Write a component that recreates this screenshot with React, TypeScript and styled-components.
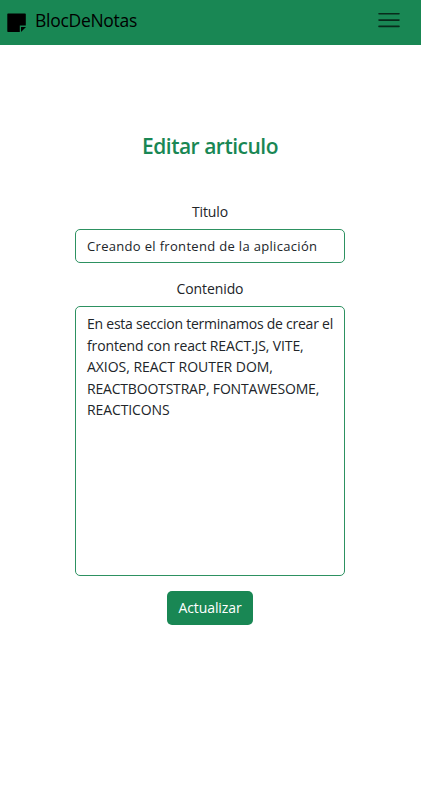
import React from 'react';
import styled, { createGlobalStyle } from 'styled-components';

const Global = createGlobalStyle`
  *{box-sizing:border-box}
  body{margin:0;background:#fff;color:#212529;font-family:"Open Sans","Noto Sans",sans-serif;font-size:14px;line-height:21.5px}
`;
const Navbar = styled.header`
  height:45.3px;background:#198754;display:flex;align-items:flex-start;justify-content:space-between;padding:0 20px 0 7px;
`;
const Brand = styled.div`
  display:flex;align-items:flex-start;color:#000;
`;
const NoteIcon = styled.svg`
  margin:13px 8px 0 0;
`;
const BrandName = styled.span`
  font-size:17.5px;line-height:24px;margin-top:8px;letter-spacing:-.28px;
`;
const Toggle = styled.svg`
  margin-top:10px;
`;
const Main = styled.main`
  display:flex;flex-direction:column;align-items:center;padding:86.7px 1px 0 0;
`;
const Title = styled.h1`
  margin:0 0 42px;height:27px;line-height:28px;font-size:21px;font-weight:600;color:#198754;letter-spacing:-.5px;
`;
const Label = styled.label`
  height:22px;margin-bottom:6.5px;letter-spacing:-.1px;
`;
const Field = styled.div<{ $h: number }>`
  width:270px;height:${p => p.$h}px;margin-bottom:14.5px;border:1px solid #2d9161;border-radius:5px;padding:6px 11px;
`;
const Text = styled.span<{ $track: number; $size?: number }>`
  display:block;white-space:nowrap;letter-spacing:${p => p.$track}px;font-size:${p => p.$size ?? 14}px;
`;
const Button = styled.button`
  width:86px;height:34px;border:0;border-radius:5px;background:#198754;color:#fff;font:inherit;letter-spacing:-.1px;padding:0;
`;

export default function App() {
  return <>
    <Global />
    <Navbar>
      <Brand>
        <NoteIcon width="20" height="20" viewBox="0 0 20 20"><path d="M1 .5h17q.8 0 .8.8v11.200h-6v6.500H1q-.7 0-.7-.7V1q0-.5.7-.5z" /><path d="M14 19v-5h5z" /></NoteIcon>
        <BrandName>BlocDeNotas</BrandName>
      </Brand>
      <Toggle width="24" height="20" viewBox="0 0 24 20" stroke="#082b1b" strokeWidth="1.6" strokeLinecap="round"><path d="M2 3.800h20M2 10.100h20M2 16.400h20" /></Toggle>
    </Navbar>
    <Main>
      <Title>Editar articulo</Title>
      <Label>Titulo</Label>
      <Field $h={34}><Text $track={0.32} $size={13}>Creando el frontend de la aplicación</Text></Field>
      <Label>Contenido</Label>
      <Field $h={270}>
        <Text $track={-0.24}>En esta seccion terminamos de crear el</Text>
        <Text $track={-0.12}>frontend con react REACT.JS, VITE,</Text>
        <Text $track={-0.04}>AXIOS, REACT ROUTER DOM,</Text>
        <Text $track={-0.19}>REACTBOOTSTRAP, FONTAWESOME,</Text>
        <Text $track={-0.1}>REACTICONS</Text>
      </Field>
      <Button>Actualizar</Button>
    </Main>
  </>;
}
